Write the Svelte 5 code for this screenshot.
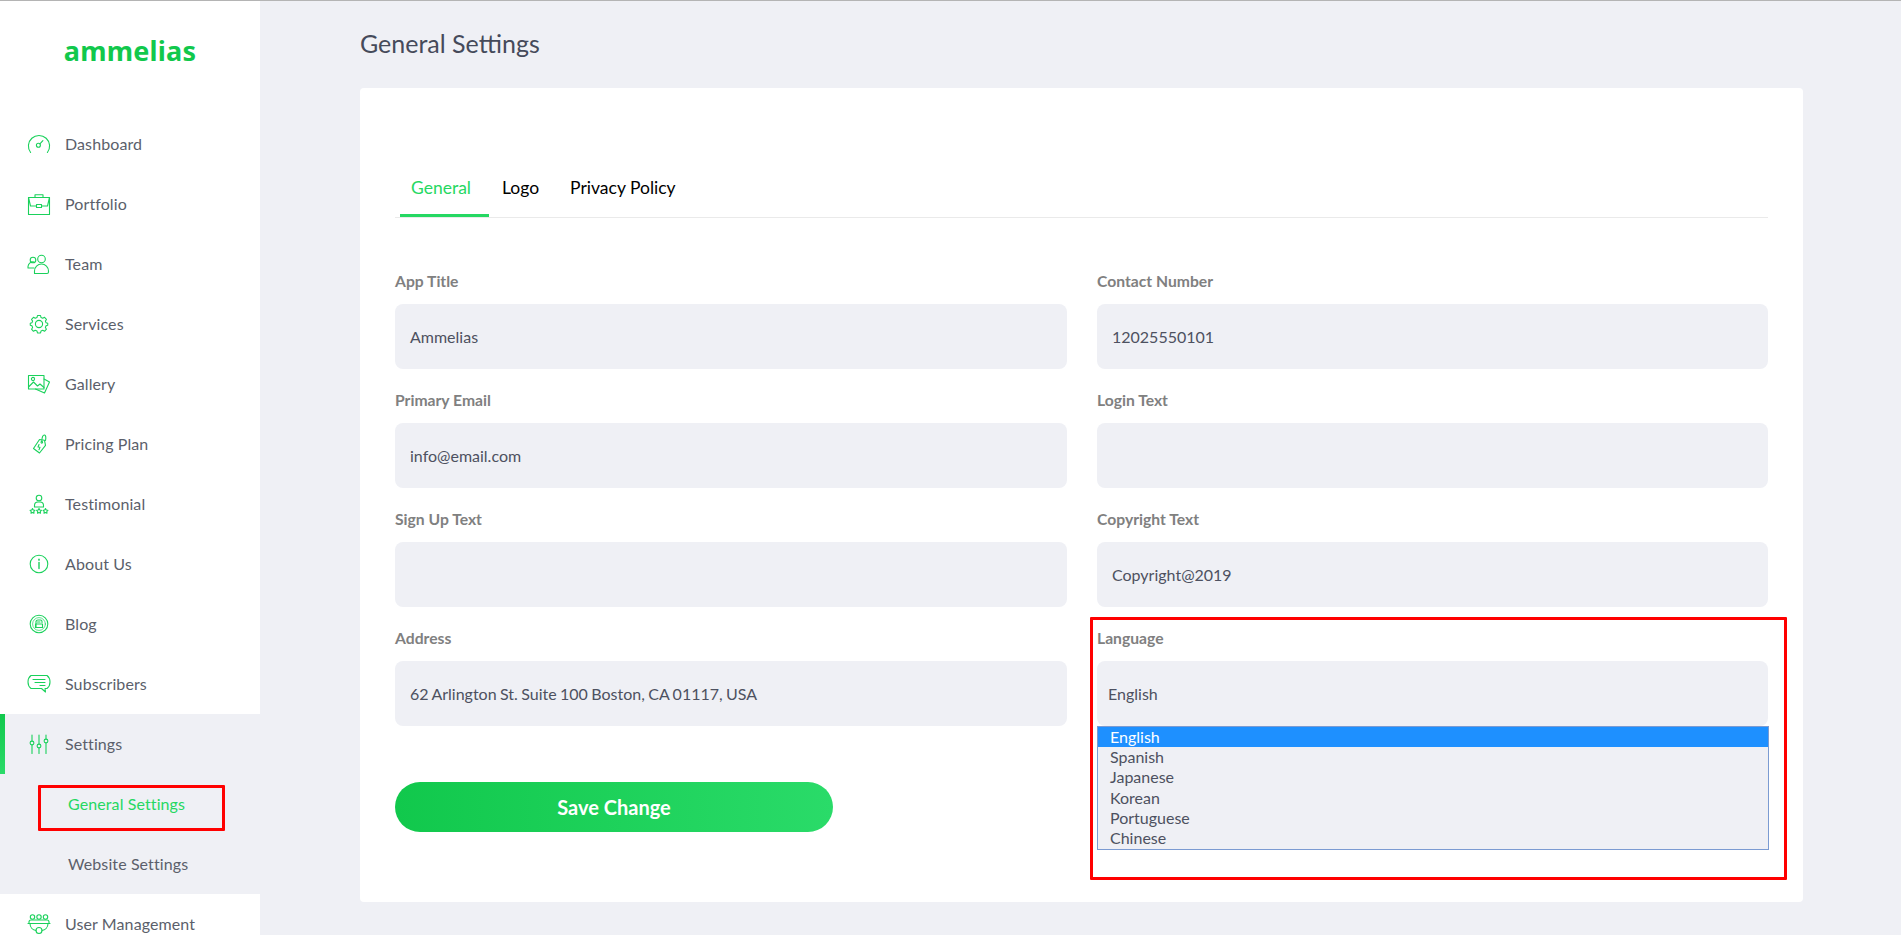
<script>
  const navTop = [
    { name: "Dashboard", icon: "dash" },
    { name: "Portfolio", icon: "case" },
    { name: "Team", icon: "team" },
    { name: "Services", icon: "gear" },
    { name: "Gallery", icon: "gallery" },
    { name: "Pricing Plan", icon: "tag" },
    { name: "Testimonial", icon: "stars" },
    { name: "About Us", icon: "info" },
    { name: "Blog", icon: "blog" },
    { name: "Subscribers", icon: "chat" }
  ];

  const fields = [
    { label: "App Title", value: "Ammelias" },
    { label: "Contact Number", value: "12025550101" },
    { label: "Primary Email", value: "info@email.com" },
    { label: "Login Text", value: "" },
    { label: "Sign Up Text", value: "" },
    { label: "Copyright Text", value: "Copyright@2019" }
  ];

  const languages = ["English", "Spanish", "Japanese", "Korean", "Portuguese", "Chinese"];
</script>

{#snippet icon(name)}
  <svg class="icon" viewBox="0 0 24 24" fill="none" stroke="currentColor" stroke-width="1.1" stroke-linecap="round" stroke-linejoin="round">
    {#if name === "dash"}
      <path d="M3.600 20.500A10.600 10.600 0 1 1 20.400 20.500" />
      <circle cx="11.400" cy="13.200" r="2" />
      <path d="M12.900 11.800l3-3.200" />
    {:else if name === "case"}
      <path d="M1.500 5.500h21v17h-21z" />
      <path d="M1.500 5.500l2 8.500h6M22.500 5.500l-2 8.500h-6M9.500 12.500h5v3h-5z" />
      <path d="M8 5.500V2.800h8v2.700" />
    {:else if name === "team"}
      <circle cx="14.500" cy="7" r="3.800" />
      <path d="M7.500 21.500v-2.500a6.500 6.500 0 0 1 14 0v1a1.500 1.500 0 0 1-1.500 1.500z" />
      <circle cx="6" cy="8" r="2.800" />
      <path d="M7 16H1v-1.500a5 5 0 0 1 6-4.500" />
    {:else if name === "gear"}
      <circle cx="12" cy="12" r="3.600" />
      <path d="M10 1.800h4l.7 2.700 2.200.9 2.400-1.300 2.500 2.800-1.400 2.200.9 2.200 2.200.7v2.600l-2.200.7-.9 2.200 1.400 2.200-2.500 2.800-2.400-1.300-2.200.9-.7 2.600h-4l-.7-2.600-2.200-.9-2.400 1.300-2.500-2.800 1.400-2.200-.9-2.200-2.200-.7v-2.600l2.200-.7.9-2.200-1.400-2.200 2.500-2.800 2.400 1.300 2.200-.9z" transform="translate(12 12) scale(.76) translate(-12 -12.900)" stroke-width="1.400" />
    {:else if name === "gallery"}
      <path d="M1.500 3.500h15.500v13.500h-15.500z" />
      <path d="M1.500 15l5-5 4 4 2.500-2 4 3.500" />
      <circle cx="6" cy="7" r="1.600" />
      <path d="M17 7l5.500 3-5 11-9-4" />
    {:else if name === "tag"}
      <path d="M12.500 7.500l5 .8 1 5-6 7.700-6-4.500z" />
      <circle cx="14.800" cy="10.300" r=".8" />
      <path d="M14.800 9.500C14.800 5 16 2.800 17.500 3c1.500.3 1.500 3 1 5.500" />
      <path d="M12 12.500l-1 2.500 2 .3-1 2.500" />
    {:else if name === "stars"}
      <circle cx="12" cy="6" r="2.800" />
      <path d="M7.500 15v-1.500a3.500 3.500 0 0 1 3.500-3.500h2a3.500 3.500 0 0 1 3.500 3.500V15z" />
      <path d="M5.500 16.500l.8 1.500 1.600.3-1.100 1.200.2 1.700-1.500-.7-1.500.7.2-1.700-1.100-1.200 1.600-.3z" />
      <path d="M12 16.500l.8 1.500 1.600.3-1.100 1.200.2 1.700-1.500-.7-1.500.7.2-1.700-1.100-1.200 1.600-.3z" />
      <path d="M18.500 16.500l.8 1.500 1.600.3-1.100 1.200.2 1.700-1.500-.7-1.500.7.2-1.700-1.100-1.200 1.600-.3z" />
    {:else if name === "info"}
      <circle cx="12" cy="12" r="8.800" />
      <path d="M12 10.500v6" stroke-width="1.400" />
      <path d="M12 7.300v1" stroke-width="1.400" />
    {:else if name === "blog"}
      <circle cx="12" cy="12" r="8.800" />
      <circle cx="12" cy="12" r="6.400" stroke-width=".7" />
      <path d="M9 15.500V9.500a2 2 0 0 1 2-1.500h2.500a1.500 1.500 0 0 1 1.500 1.500v1" />
      <path d="M8.500 12h7v3.500h-7zM10.500 10h2.500" />
    {:else if name === "chat"}
      <path d="M4 3.500h16c2 1.500 3 3.500 3 6.500s-1 5-3 6.500h-2l.5 3.500-4-3.500H4c-2-1.500-3-3.500-3-6.500s1-5 3-6.500z" />
      <path d="M6 7.500h12M8 10.500h10M13 13.500h5" />
    {:else if name === "sliders"}
      <path d="M5 3v6M5 13v8.500M12 3v9M12 16v5.500M19 3v4M19 11v10.500" />
      <circle cx="5" cy="11" r="1.900" />
      <circle cx="12" cy="14" r="1.900" />
      <circle cx="19" cy="9" r="1.900" />
    {:else if name === "users"}
      <circle cx="5.500" cy="5" r="2.200" />
      <circle cx="12" cy="5" r="2.200" />
      <circle cx="18.500" cy="5" r="2.200" />
      <path d="M2 11.500V10a2 2 0 0 1 2-2h16a2 2 0 0 1 2 2v1.500M1 11.500h22" />
      <path d="M3 11.500c0 4 3 6.500 6 7M21 11.500c0 4-3 6.500-6 7" />
      <circle cx="12" cy="18.500" r="3" />
    {/if}
  </svg>
{/snippet}

<div class="page">
  <aside class="sidebar">
    <div class="logo">ammelias</div>
    <nav>
      {#each navTop as item}
        <div class="nav-item">
          {@render icon(item.icon)}
          <span>{item.name}</span>
        </div>
      {/each}
      <div class="group">
        <div class="nav-item active">
          {@render icon("sliders")}
          <span>Settings</span>
        </div>
        <div class="sub-item current">
          <span>General Settings</span>
          <div class="mark mark-nav"></div>
        </div>
        <div class="sub-item">Website Settings</div>
      </div>
      <div class="nav-item">
        {@render icon("users")}
        <span>User Management</span>
      </div>
    </nav>
  </aside>

  <main>
    <h1>General Settings</h1>
    <section class="card">
      <div class="tabs">
        <div class="tab selected">General</div>
        <div class="tab logo-tab">Logo</div>
        <div class="tab">Privacy Policy</div>
      </div>

      <div class="form">
        {#each fields as f}
          <div class="field">
            <div class="label">{f.label}</div>
            <div class="input">{f.value}</div>
          </div>
        {/each}

        <div class="field">
          <div class="label">Address</div>
          <div class="input">62 Arlington St. Suite 100 Boston, CA 01117, USA</div>
          <button type="button" class="save">Save Change</button>
        </div>

        <div class="field language">
          <div class="mark mark-lang"></div>
          <div class="label">Language</div>
          <div class="input select">English</div>
          <ul class="dropdown">
            {#each languages as lang, i}
              <li class:hover={i === 0}>{lang}</li>
            {/each}
          </ul>
        </div>
      </div>
    </section>
  </main>
</div>

<style>
  :global(html), :global(body) {
    margin: 0;
    height: 935px;
    overflow: hidden;
    background: #eff0f5;
  }

  .page {
    display: flex;
    height: 934px;
    border-top: 1px solid #b4b4b4;
    font-family: Lato, "Liberation Sans", sans-serif;
    color: #5b5f6b;
    overflow: hidden;
  }

  .sidebar {
    width: 260px;
    flex: none;
    background: #fff;
  }

  .logo {
    height: 113px;
    padding-top: 34px;
    box-sizing: border-box;
    text-align: center;
    font-family: "Noto Sans", sans-serif;
    font-weight: 700;
    font-size: 27px;
    line-height: 32px;
    letter-spacing: 0.2px;
    color: #11c84c;
  }

  .nav-item {
    position: relative;
    display: flex;
    align-items: center;
    height: 60px;
    box-sizing: border-box;
    padding-left: 27px;
    padding-bottom: 2px;
    font-size: 16px;
    letter-spacing: 0.1px;
  }

  .icon {
    width: 24px;
    height: 24px;
    margin-top: 2px;
    margin-right: 14px;
    color: #1ad15b;
    flex: none;
  }

  .group {
    background: #eff0f5;
  }

  .active::before {
    content: "";
    position: absolute;
    left: 0;
    top: 0;
    bottom: 0;
    width: 5px;
    background: linear-gradient(#11c84c, #2bdb69);
  }

  .sub-item {
    position: relative;
    display: flex;
    align-items: center;
    height: 60px;
    box-sizing: border-box;
    padding-left: 68px;
    padding-bottom: 2px;
    font-size: 16px;
    letter-spacing: 0.1px;
  }

  .current {
    color: #25d862;
  }

  .mark {
    position: absolute;
    border: 3px solid #f00;
    box-sizing: border-box;
    border-radius: 1px;
  }

  .mark-nav {
    left: 38px;
    top: 11px;
    width: 187px;
    height: 46px;
  }

  .mark-lang {
    left: -7px;
    top: -7px;
    width: 697px;
    height: 263px;
  }

  main {
    flex: 1;
    padding-left: 100px;
    padding-right: 98px;
  }

  h1 {
    margin: 0;
    height: 87px;
    padding-top: 26px;
    box-sizing: border-box;
    font-size: 25px;
    line-height: 32px;
    font-weight: 400;
    color: #454a5a;
  }

  .card {
    height: 814px;
    box-sizing: border-box;
    background: #fff;
    border-radius: 4px;
    padding: 80px 35px 0;
  }

  .tabs {
    display: flex;
    height: 49px;
    padding-left: 5px;
    border-bottom: 1px solid #eaeaea;
  }

  .tab {
    padding: 8px 14px 0 11px;
    font-size: 17.500px;
    line-height: 24px;
    color: #000;
    margin-right: 6px;
  }

  .logo-tab {
    margin-left: -1px;
  }

  .selected {
    color: #25d862;
    border-bottom: 3px solid #25d862;
    height: 38px;
    padding-right: 18px;
    padding-left: 11px;
    margin-right: 3px;
  }

  .form {
    display: grid;
    grid-template-columns: 672px 671px;
    column-gap: 30px;
    padding-top: 49px;
  }

  .field {
    position: relative;
    height: 119px;
  }

  .label {
    height: 37px;
    font-size: 15.700px;
    line-height: 28px;
    font-weight: 700;
    color: #808080;
  }

  .input {
    height: 65px;
    box-sizing: border-box;
    padding: 0 15px;
    display: flex;
    align-items: center;
    background: #eff0f5;
    border-radius: 8px;
    font-size: 16px;
    word-spacing: -0.7px;
    color: #4d5160;
  }

  .select {
    padding-left: 11px;
  }

  .dropdown {
    margin: 0 -1px 0 0;
    padding: 0;
    list-style: none;
    background: #eff0f5;
    border: 1px solid #7b9bd2;
    height: 124px;
    box-sizing: border-box;
    font-size: 16px;
    line-height: 20px;
    color: #4d5160;
  }

  .dropdown li {
    padding-left: 12px;
    height: 20px;
  }

  .dropdown li:nth-child(n + 4) {
    position: relative;
    top: 1px;
  }

  .hover {
    background: #1e90ff;
    color: #fff;
  }

  .save {
    display: block;
    width: 438px;
    height: 50px;
    margin-top: 56px;
    border: 0;
    border-radius: 25px;
    background: linear-gradient(90deg, #11c84c, #2adb69);
    color: #fff;
    font-family: inherit;
    font-size: 20px;
    font-weight: 700;
    padding: 0;
  }
</style>
